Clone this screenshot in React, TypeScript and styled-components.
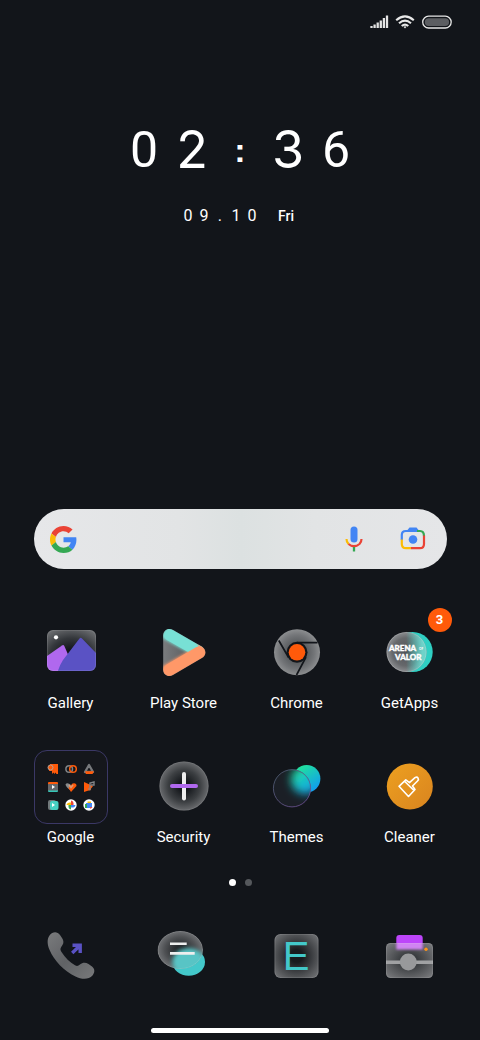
import React from "react";
import styled, { createGlobalStyle } from "styled-components";

const GlobalStyle = createGlobalStyle`
  *, *::before, *::after { box-sizing: border-box; }
  html { background: #12151a; }
  body { margin: 0; background: #12151a; color: #fff; font-family: Roboto, "Liberation Sans", sans-serif; }
  button, input { font: inherit; color: inherit; }
`;

const Screen = styled.main`
  display: flex;
  flex-direction: column;
  min-height: 100vh;
  padding-bottom: 7px;
`;

const StatusBar = styled.header`
  display: flex;
  justify-content: flex-end;
  align-items: center;
  gap: 6px;
  height: 44px;
  padding: 0 28px;
`;

const Clock = styled.section`
  display: flex;
  flex-direction: column;
  align-items: center;
  padding-top: 74px;
`;

const Time = styled.time`
  display: flex;
  align-items: center;
  justify-content: center;
  height: 64px;
`;

const Digit = styled.span<{ $strong?: boolean }>`
  width: 48px;
  text-align: center;
  font-family: ${(p) => (p.$strong ? "Inter" : "Roboto")}, "Liberation Sans", sans-serif;
  font-size: ${(p) => (p.$strong ? 52 : 50)}px;
  line-height: 64px;
`;

const Colon = styled.span`
  width: 48px;
  text-align: center;
  font-family: "Liberation Sans", sans-serif;
  font-size: 34px;
  font-weight: 700;
  line-height: 60px;
`;

const DateLine = styled.p`
  display: flex;
  align-items: center;
  gap: 18px;
  margin: 24px 0 0;
  padding-right: 6px;
  line-height: 20px;
`;

const DateNumber = styled.time`
  display: flex;
  font-size: 16px;
  span { width: 16px; text-align: center; }
`;

const Weekday = styled.span`
  font-size: 14px;
  font-weight: 500;
`;

const SearchBar = styled.form`
  display: flex;
  align-items: center;
  height: 60px;
  margin: 283px 33px 0 34px;
  padding: 0 20px 0 16px;
  border-radius: 30px;
  background: linear-gradient(90deg, #e6e7e9 0%, #e2e4e5 35%, #dce1e1 50%, #e2e4e5 68%, #e5e6e8 100%);
`;

const SearchInput = styled.input`
  flex: 1;
  min-width: 0;
  border: 0;
  outline: 0;
  padding: 0 12px;
  background: transparent;
  color: #202124;
  font-size: 16px;
`;

const Tools = styled.div`
  display: flex;
  gap: 35px;
`;

const PlainButton = styled.button`
  display: flex;
  padding: 0;
  border: 0;
  background: none;
  cursor: pointer;
`;

const AppGrid = styled.section`
  display: grid;
  grid-template-columns: repeat(4, 1fr);
  row-gap: 34px;
  padding: 0 14px;
  margin-top: 47px;
`;

const Dock = styled.nav`
  display: grid;
  grid-template-columns: repeat(4, 1fr);
  padding: 0 14px;
  margin-top: 32px;
`;

const AppButton = styled(PlainButton)`
  position: relative;
  flex-direction: column;
  align-items: center;
  justify-self: center;
  width: 100%;
  font-size: 15px;
  line-height: 26px;
`;

const IconArt = styled.span`
  position: relative;
  display: block;
  width: 74px;
  height: 74px;
  svg { display: block; }
`;

const Badge = styled.span`
  position: absolute;
  top: -8px;
  right: -5px;
  width: 24px;
  height: 24px;
  border-radius: 50%;
  background: #ff5a0a;
  font-size: 13px;
  font-weight: 700;
  line-height: 24px;
  text-align: center;
`;

const Folder = styled.span`
  display: grid;
  grid-template-columns: repeat(3, 12px);
  grid-auto-rows: 12px;
  place-content: center;
  gap: 6px;
  width: 74px;
  height: 74px;
  border: 1px solid #3b3866;
  border-radius: 13px;
  background: #15171c;
`;

const Pager = styled.div`
  display: flex;
  justify-content: center;
  gap: 9px;
  margin-top: 29px;
`;

const PageDot = styled.span<{ $active?: boolean }>`
  width: 7px;
  height: 7px;
  border-radius: 50%;
  background: ${(p) => (p.$active ? "#fff" : "#55585c")};
`;

const HomeBar = styled.div`
  width: 37%;
  height: 5px;
  margin: auto auto 0;
  border-radius: 3px;
  background: #fff;
`;

const Art = ({ children }: { children: React.ReactNode }) => (
  <svg width="74" height="74" viewBox="0 0 74 74" fill="none" aria-hidden="true">{children}</svg>
);

const Gallery = () => (
  <Art>
    <defs>
      <radialGradient id="galGlass" cx=".5" cy=".65" r=".75">
        <stop offset=".2" stopColor="#111418" /><stop offset=".6" stopColor="#34373b" /><stop offset="1" stopColor="#6c6e71" />
      </radialGradient>
      <clipPath id="galClip"><rect x="13" y="14" width="49" height="41" rx="6" /></clipPath>
    </defs>
    <g clipPath="url(#galClip)">
      <rect x="13" y="14" width="49" height="41" fill="url(#galGlass)" />
      <path d="M13 40 28 29.400Q29.600 28.600 30.300 30L36 43 30 56H13Z" fill="#b068ee" />
      <path d="M23.500 56Q26 48.500 29 44L45.500 22.500Q46.700 21 48 22.500L63 38V56Z" fill="#5a52c4" />
    </g>
    <rect x="13.500" y="14.500" width="48" height="40" rx="5.500" stroke="#fff" strokeOpacity=".1" />
    <circle cx="22" cy="21.300" r="2.100" fill="#fff" />
  </Art>
);

const PlayStore = () => (
  <Art>
    <defs>
      <clipPath id="playClip"><path d="M16.200 19.500C16.200 14 21.500 11.500 26 14L55 30.700C59.500 33.500 59.500 39.300 55 42L26 59C21.500 61.500 16.200 59 16.200 53.700Z" /></clipPath>
      <filter id="playBlur" x="-30%" y="-30%" width="160%" height="160%"><feGaussianBlur stdDeviation="1.600" /></filter>
      <linearGradient id="playGlass"><stop offset="0" stopColor="#7c7e80" /><stop offset=".7" stopColor="#56585b" /></linearGradient>
    </defs>
    <g clipPath="url(#playClip)">
      <rect x="14" y="12" width="46" height="50" fill="url(#playGlass)" />
      <path d="M17 15 54 36" stroke="#78e0d5" strokeWidth="14" filter="url(#playBlur)" />
      <path d="M16 57.500 58 33" stroke="#ff9868" strokeWidth="13" filter="url(#playBlur)" />
      <path d="M22.700 19.300 46 32.500" stroke="#78e0d5" strokeWidth="11" strokeLinecap="round" />
      <path d="M22.700 53.700 52 36.500" stroke="#ff9868" strokeWidth="12" strokeLinecap="round" />
    </g>
  </Art>
);

const Chrome = () => (
  <Art>
    <defs>
      <radialGradient id="chGlass"><stop offset=".45" stopColor="#5c5f62" /><stop offset=".75" stopColor="#737578" /><stop offset="1" stopColor="#8c8e90" /></radialGradient>
    </defs>
    <circle cx="37" cy="36.300" r="23" fill="url(#chGlass)" />
    <circle cx="37" cy="36.300" r="10.500" fill="#12151a" />
    <path d="M57.500 26.600H37M18.800 24.500 28.600 41.500M36.500 59 46 41.200" stroke="#12151a" strokeWidth="1.700" />
    <circle cx="37" cy="36.300" r="8.300" fill="#ff5a0a" />
  </Art>
);

const GetApps = () => (
  <Art>
    <defs>
      <radialGradient id="gaGlass"><stop offset="0" stopColor="#505257" /><stop offset=".7" stopColor="#66686b" /><stop offset="1" stopColor="#8b8d90" /></radialGradient>
      <linearGradient id="gaTeal" x1="25" x2="52" y1="0" y2="0" gradientUnits="userSpaceOnUse"><stop offset=".3" stopColor="#43d5ca" stopOpacity="0" /><stop offset=".9" stopColor="#6ed2c9" /></linearGradient>
    </defs>
    <circle cx="39.700" cy="36" r="20" fill="#2fcfc3" />
    <circle cx="33.500" cy="36" r="20" fill="url(#gaGlass)" />
    <circle cx="33.500" cy="36" r="20" fill="url(#gaTeal)" />
    <circle cx="33.500" cy="36" r="19.600" stroke="#fff" strokeOpacity=".2" strokeWidth=".8" />
    <g fill="#fff" stroke="#fff" strokeWidth=".4" fontFamily="Lato, sans-serif" fontWeight="900" fontSize="8">
      <text x="16" y="35">ARENA</text>
      <text x="22" y="44">VALOR</text>
    </g>
    <text x="46" y="34" fill="#fff" fontFamily="Lato, sans-serif" fontWeight="900" fontSize="3">OF</text>
  </Art>
);

const Security = () => (
  <Art>
    <defs><radialGradient id="secGlass"><stop offset=".2" stopColor="#14171b" /><stop offset=".65" stopColor="#3c3f42" /><stop offset="1" stopColor="#696b6e" /></radialGradient></defs>
    <circle cx="37" cy="36" r="24.600" fill="url(#secGlass)" />
    <circle cx="37" cy="36" r="24.200" stroke="#fff" strokeOpacity=".08" />
    <path d="M37 24V48.500" stroke="#eee" strokeWidth="4" strokeLinecap="round" />
    <path d="M25 36H49" stroke="#b068ee" strokeWidth="4" strokeLinecap="round" />
  </Art>
);

const Themes = () => (
  <Art>
    <defs>
      <linearGradient id="thOrb" x1="0" y1="0" x2=".7" y2="1"><stop offset=".2" stopColor="#20dfa0" /><stop offset="1" stopColor="#109cf0" /></linearGradient>
      <linearGradient id="thRim" x1="0" y1="0" x2="1" y2="1"><stop offset="0" stopColor="#4c6170" /><stop offset="1" stopColor="#76509f" /></linearGradient>
      <filter id="thBlur" x="-40%" y="-40%" width="180%" height="180%"><feGaussianBlur stdDeviation="4" /></filter>
      <clipPath id="thClip"><circle cx="32" cy="38.300" r="19" /></clipPath>
    </defs>
    <circle cx="46.700" cy="28.700" r="13.700" fill="url(#thOrb)" />
    <g clipPath="url(#thClip)">
      <circle cx="32" cy="38.300" r="19" fill="#1b1f26" />
      <circle cx="45" cy="30" r="14" fill="url(#thOrb)" filter="url(#thBlur)" />
    </g>
    <circle cx="32" cy="38.300" r="18.600" stroke="url(#thRim)" strokeOpacity=".8" />
  </Art>
);

const Cleaner = () => (
  <Art>
    <defs><linearGradient id="clFill" x1="0" y1="0" x2="1" y2="1"><stop offset="0" stopColor="#eda020" /><stop offset="1" stopColor="#d9841f" /></linearGradient></defs>
    <circle cx="36.800" cy="36.500" r="23" fill="url(#clFill)" />
    <path d="M26 36.300 32.800 29.800 36.500 32.600 42 27.600Q44 26.400 45 28Q46 29.500 44.500 31L39.500 36 42 39.500 35.500 46.500ZM31.800 31.500 41 40.500" stroke="#fff" strokeWidth="1.600" strokeLinejoin="round" />
  </Art>
);

const Phone = () => (
  <Art>
    <defs><linearGradient id="phFill" x1="0" y1="0" x2="1" y2="1"><stop offset="0" stopColor="#7a7b7d" /><stop offset=".5" stopColor="#606265" /><stop offset="1" stopColor="#78797b" /></linearGradient></defs>
    <path d="M15.500 17.500C18.500 13.500 23 13 26 17L28 20C30.300 23.500 29.500 26 27.500 28.500C26 30.500 26.200 32 27.500 34C31 39.500 36 44.500 41 47.300C43 48.500 44.300 48 46 46.500C48.500 44.300 51.500 44 54.500 46L58 48.600C61 51 61 54.500 58.500 57.500C54.500 62 47.500 61.500 41.500 58.500C30 53 20 42.500 15.600 32C13.300 26.500 12.800 21 15.500 17.500Z" fill="url(#phFill)" />
    <path d="M38.500 27.200H46.200V35M45.500 28 38.200 35" stroke="#5a52c4" strokeWidth="3.400" />
  </Art>
);

const Messages = () => (
  <Art>
    <defs>
      <radialGradient id="msGlass"><stop offset=".2" stopColor="#25282b" /><stop offset=".7" stopColor="#505255" /><stop offset="1" stopColor="#707275" /></radialGradient>
      <filter id="msBlur" x="-30%" y="-30%" width="160%" height="160%"><feGaussianBlur stdDeviation="2" /></filter>
      <clipPath id="msClip"><ellipse cx="33.300" cy="32" rx="22.700" ry="19" /></clipPath>
    </defs>
    <ellipse cx="41.700" cy="44" rx="16.300" ry="13.800" fill="#43c8ca" />
    <g clipPath="url(#msClip)">
      <ellipse cx="33.300" cy="32" rx="22.700" ry="19" fill="url(#msGlass)" />
      <ellipse cx="41.700" cy="44" rx="16.300" ry="13.800" fill="#59c4c5" filter="url(#msBlur)" />
    </g>
    <ellipse cx="33.300" cy="32" rx="22.300" ry="18.600" stroke="#fff" strokeOpacity=".12" />
    <path d="M23 25.700H39.700M23 35.400H47.700" stroke="#eee" strokeWidth="2.600" />
  </Art>
);

const Editor = () => (
  <Art>
    <defs><radialGradient id="edGlass" r=".7"><stop offset=".2" stopColor="#181b1f" /><stop offset=".65" stopColor="#4d4f52" /><stop offset="1" stopColor="#77797c" /></radialGradient></defs>
    <rect x="14.500" y="16" width="44" height="44" rx="6" fill="url(#edGlass)" />
    <rect x="15" y="16.500" width="43" height="43" rx="5.500" stroke="#fff" strokeOpacity=".1" />
    <text x="22.700" y="51.700" fill="#43c8ca" fontFamily="Liberation Sans, sans-serif" fontSize="40">E</text>
  </Art>
);

const Camera = () => (
  <Art>
    <defs>
      <radialGradient id="caGlass" r=".7"><stop offset=".15" stopColor="#303336" /><stop offset="1" stopColor="#7e7f82" /></radialGradient>
      <filter id="caBlur" x="-20%" y="-20%" width="140%" height="140%"><feGaussianBlur stdDeviation="1.200" /></filter>
      <clipPath id="caClip"><rect x="13" y="25" width="47" height="35" rx="4.500" /></clipPath>
    </defs>
    <rect x="23.300" y="17" width="26.400" height="14" rx="3" fill="#bd45fa" />
    <g clipPath="url(#caClip)">
      <rect x="13" y="25" width="47" height="35" fill="url(#caGlass)" />
      <rect x="23.300" y="20" width="26.400" height="11.500" fill="#d084f2" filter="url(#caBlur)" />
      <path d="M13 44.200H60" stroke="#a0a1a3" strokeWidth="3.600" />
    </g>
    <rect x="13.500" y="25.500" width="46" height="34" rx="4" stroke="#fff" strokeOpacity=".1" />
    <circle cx="35.300" cy="44" r="8.400" fill="#98999b" />
    <circle cx="53" cy="31.300" r="1.700" fill="#ff9518" />
  </Art>
);

const miniIcons: React.ReactNode[] = [
  <><path d="M3 1H11V11H9.500L8.500 9.500 7.500 11 6.500 9.500 5 11V8H2Z" fill="#ff5a0a" /><circle cx="3.500" cy="4.500" r="2.500" fill="#ff5a0a" stroke="#b7a49a" /></>,
  <><circle cx="4.200" cy="6" r="3.300" fill="none" stroke="#828487" strokeWidth="1.500" /><circle cx="8" cy="6" r="3.300" fill="none" stroke="#ff5a0a" strokeWidth="1.500" /></>,
  <><path d="M6 2 2 9H10Z" fill="none" stroke="#77797c" strokeWidth="2.300" strokeLinejoin="round" /><path d="M2 8.300H11L9.500 11H3Z" fill="#ff5a0a" /></>,
  <><rect x="1" y="1" width="10" height="4" rx="1" fill="#ff5a0a" /><rect x="1" y="7" width="10" height="4" rx="1" fill="#34c6b8" /><rect x="1" y="3" width="10" height="6.500" fill="#66686b" /><path d="M5 4 8 6 5 8Z" fill="#fff" /></>,
  <><path d="M.5 3.500Q2 1 6 4L5 9Q1 6 .5 3.500Z" fill="#8a8c8e" /><path d="M3.500 7 7.500 2.500Q11.500 1.500 11.500 5L6 11Z" fill="#ff5a0a" /><path d="M4 4 6 6.500 8 4" stroke="#d99b79" strokeWidth="1.500" fill="none" /></>,
  <><path d="M1 1 10 5 7 9 1 11Z" fill="#ff5a0a" /><path d="M7 8V2L11 1V4H8" stroke="#818386" strokeWidth="1.400" fill="none" /><circle cx="6.500" cy="8" r="1.500" fill="#b4795d" /></>,
  <><rect x="1" y="1" width="8" height="10" rx="2" fill="#72797b" /><rect x="3" y="2" width="8.500" height="9" rx="2" fill="#46cfc2" /><path d="M5 4 8 6 5 8Z" fill="#fff" /></>,
  <><circle cx="6" cy="6" r="5.700" fill="#fff" /><path d="M6 6V1.500Q9 2 8.500 6Z" fill="#ea4335" /><path d="M6 6H10.500Q10 9 6 8.500Z" fill="#4285f4" /><path d="M6 6V10.500Q3 10 3.500 6Z" fill="#34a853" /><path d="M6 6H1.500Q2 3 6 3.500Z" fill="#fbbc04" /></>,
  <><circle cx="6" cy="6" r="5.700" fill="#fff" /><path d="M3 4H9V8L7 9H3Z" fill="#4285f4" /><path d="M2 5H4V9H2Z" fill="#34a853" /><path d="M7 8H9.500L7.500 10Z" fill="#ea4335" /><path d="M4.500 2.500H8V4H4.500Z" fill="#fbbc04" /></>,
];

const GoogleFolder = () => (
  <Folder>
    {miniIcons.map((icon, i) => <svg key={i} width="12" height="12" viewBox="0 0 12 12" aria-hidden="true">{icon}</svg>)}
  </Folder>
);

const apps: { name: string; Icon: React.FC; badge?: number }[] = [
  { name: "Gallery", Icon: Gallery },
  { name: "Play Store", Icon: PlayStore },
  { name: "Chrome", Icon: Chrome },
  { name: "GetApps", Icon: GetApps, badge: 3 },
  { name: "Google", Icon: GoogleFolder },
  { name: "Security", Icon: Security },
  { name: "Themes", Icon: Themes },
  { name: "Cleaner", Icon: Cleaner },
];

const dockApps = [
  { name: "Phone", Icon: Phone },
  { name: "Messages", Icon: Messages },
  { name: "Editor", Icon: Editor },
  { name: "Camera", Icon: Camera },
];

export default function App() {
  return (
    <>
      <GlobalStyle />
      <Screen>
        <StatusBar>
          <svg width="19" height="14" viewBox="0 0 19 14" aria-hidden="true">
            <path d="M1.500 13V11M4.600 13V9.500M7.700 13V7.500M10.800 13V5.500M13.900 13V3M17 13V.5" stroke="#e4e4e4" strokeWidth="2.300" />
          </svg>
          <svg width="20" height="14" viewBox="0 0 20 14" fill="none" stroke="#e8e8e8" strokeWidth="2.100" aria-hidden="true">
            <path d="M1.200 5.200Q10-2.600 18.800 5.200M4 8.300Q10 3 16 8.300M6.700 11Q10 8.200 13.300 11" />
            <path d="M8.500 11.800 10 13.500 11.500 11.800Q10 10.800 8.500 11.800Z" fill="#e8e8e8" stroke="none" />
          </svg>
          <svg width="31" height="14" viewBox="0 0 31 14" aria-hidden="true">
            <rect x="1.700" y="1.200" width="28.500" height="11.800" rx="5.900" fill="none" stroke="#e8e8e8" strokeWidth="1.300" />
            <rect x="3.800" y="3.200" width="24.300" height="7.800" rx="3.900" fill="#5c5e62" />
          </svg>
        </StatusBar>

        <Clock>
          <Time dateTime="02:36">
            <Digit>0</Digit><Digit $strong>2</Digit><Colon>:</Colon><Digit $strong>3</Digit><Digit>6</Digit>
          </Time>
          <DateLine>
            <DateNumber dateTime="09-10">{"09.10".split("").map((c, i) => <span key={i}>{c}</span>)}</DateNumber>
            <Weekday>Fri</Weekday>
          </DateLine>
        </Clock>

        <SearchBar role="search">
          <svg width="27" height="27" viewBox="0 0 48 48" aria-hidden="true">
            <path fill="#ea4335" d="M24 9.500c3.500 0 6.700 1.200 9.200 3.600l6.900-6.900C35.900 2.400 30.500 0 24 0 14.600 0 6.500 5.400 2.600 13.200l8 6.200C12.400 13.700 17.700 9.500 24 9.500z" />
            <path fill="#4285f4" d="M47 24.600c0-1.600-.2-3.100-.4-4.600H24v9h12.900c-.6 3-2.200 5.500-4.700 7.200l7.700 6C44.400 38 47 31.800 47 24.600z" />
            <path fill="#fbbc05" d="M10.500 28.600c-.5-1.500-.8-3-.8-4.600s.3-3.100.8-4.600l-8-6.200C1 16.500 0 20.100 0 24s.9 7.500 2.600 10.800l7.900-6.200z" />
            <path fill="#34a853" d="M24 48c6.500 0 11.900-2.100 15.900-5.800l-7.700-6c-2.200 1.400-4.900 2.300-8.200 2.300-6.300 0-11.600-4.200-13.500-9.900l-7.900 6.200C6.500 42.600 14.600 48 24 48z" />
          </svg>
          <SearchInput type="text" aria-label="Search" />
          <Tools>
            <PlainButton type="button" aria-label="Voice search">
              <svg width="20" height="28" viewBox="0 0 20 28" fill="none">
                <rect x="6.500" y="1.500" width="7" height="16" rx="3.500" fill="#4285f4" />
                <path d="M2.500 14Q2.500 17 4.500 19" stroke="#fbbc05" strokeWidth="2.200" />
                <path d="M4.500 19Q10 23.500 15.500 19Q17.500 17 17.500 14" stroke="#ea4335" strokeWidth="2.200" />
                <path d="M10 22V26.500" stroke="#34a853" strokeWidth="2.300" />
              </svg>
            </PlainButton>
            <PlainButton type="button" aria-label="Search with camera">
              <svg width="28" height="28" viewBox="0 0 28 28" fill="none" strokeWidth="2.200">
                <path d="M2.800 15V10Q2.800 6 6.800 6H18" stroke="#4285f4" />
                <path d="M8.500 5 10.500 2.500H17.500L19.500 5Z" fill="#4285f4" />
                <path d="M18 6H21Q25 6 25 11" stroke="#34a853" />
                <path d="M25 10.500V19Q25 23.200 21 23.200H12" stroke="#ea4335" />
                <path d="M2.800 14.500V19Q2.800 23.200 7 23.200H12" stroke="#fbbc05" />
                <circle cx="14" cy="14.500" r="4.300" fill="#4285f4" />
              </svg>
            </PlainButton>
          </Tools>
        </SearchBar>

        <AppGrid aria-label="Apps">
          {apps.map(({ name, Icon, badge }) => (
            <AppButton key={name} type="button">
              <IconArt><Icon />{badge && <Badge>{badge}</Badge>}</IconArt>
              {name}
            </AppButton>
          ))}
        </AppGrid>

        <Pager aria-hidden="true"><PageDot $active /><PageDot /></Pager>

        <Dock aria-label="Dock">
          {dockApps.map(({ name, Icon }) => (
            <AppButton key={name} type="button" aria-label={name}>
              <IconArt><Icon /></IconArt>
            </AppButton>
          ))}
        </Dock>
        <HomeBar />
      </Screen>
    </>
  );
}
